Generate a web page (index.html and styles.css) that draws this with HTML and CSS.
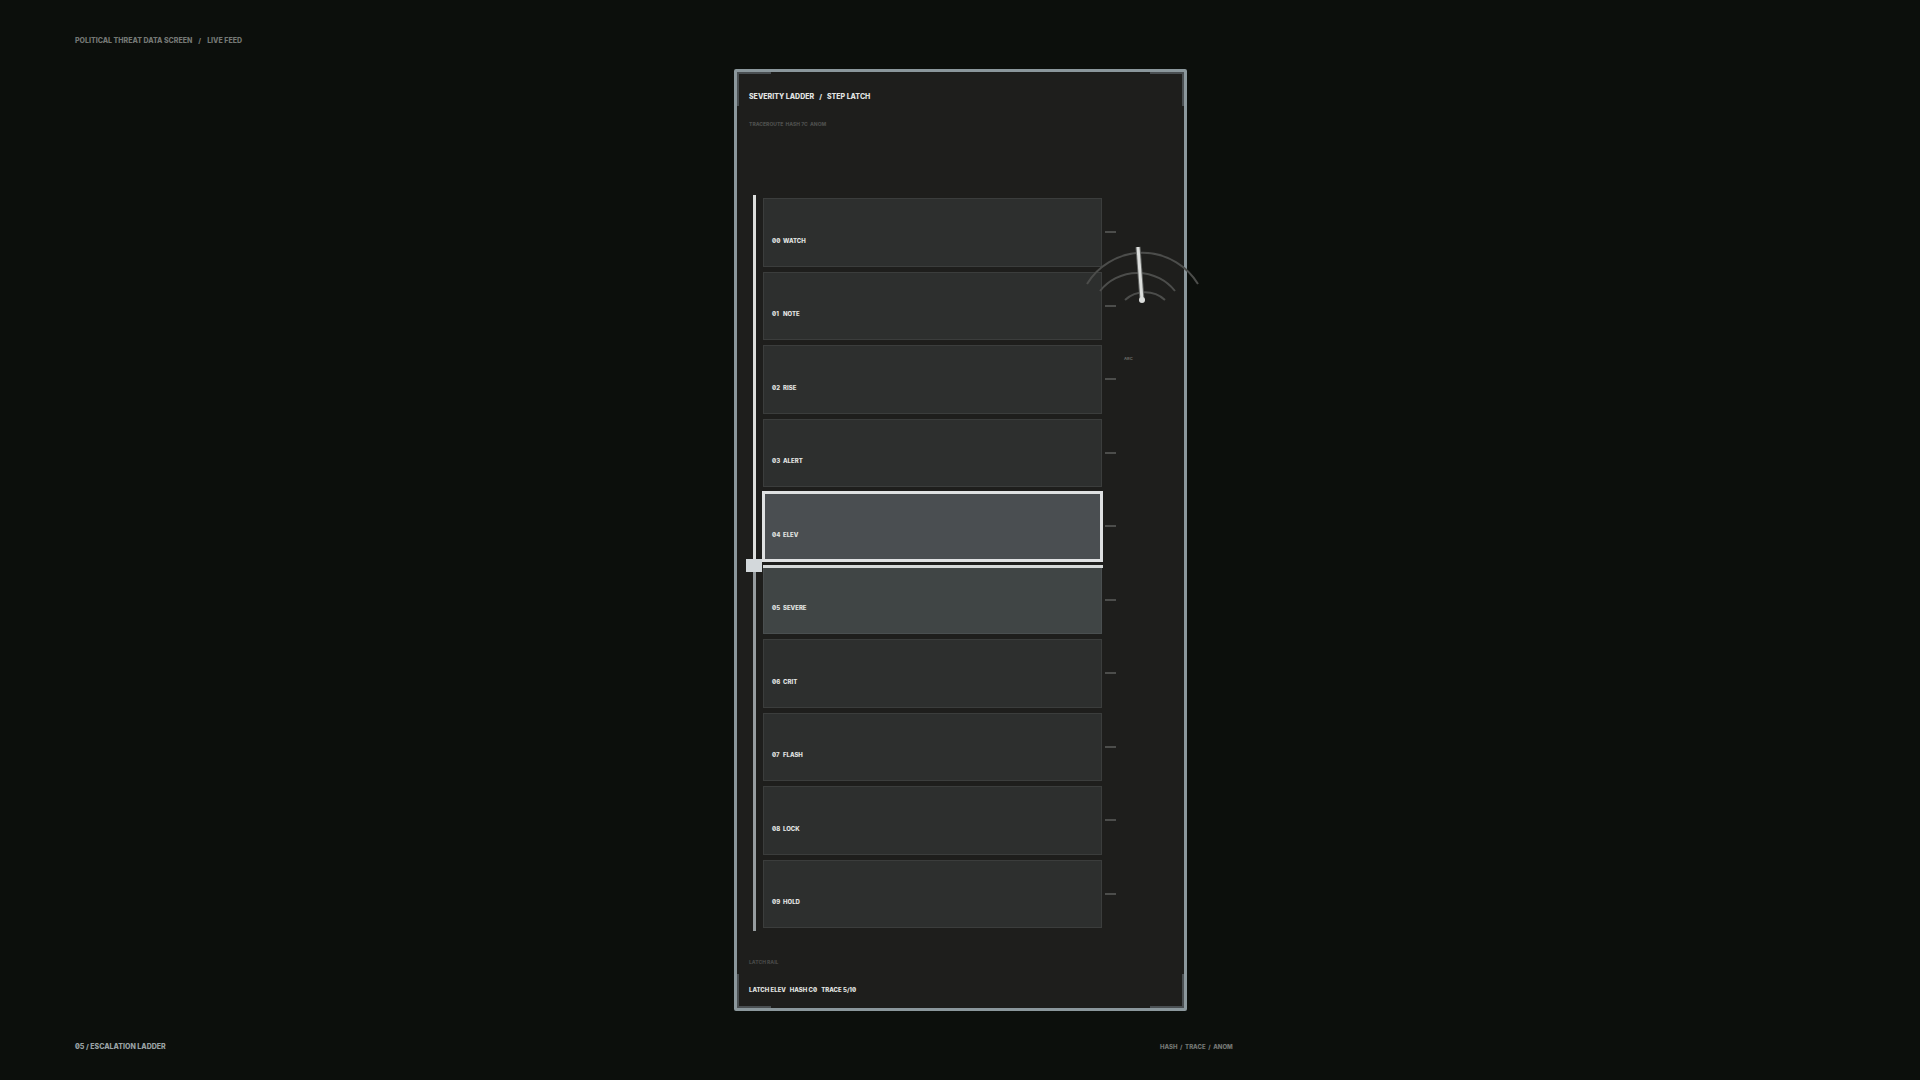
FILE: index.html
```
<!DOCTYPE html>
<html lang="en">
<head>
    <meta charset="UTF-8">
    <meta name="viewport" content="width=device-width, initial-scale=1.0">
    <title>Escalation Ladder</title>
    <link rel="stylesheet" href="styles.css">
</head>
<body>
    <header class="top">POLITICAL THREAT DATA SCREEN<b>/</b>LIVE FEED</header>

    <main class="panel">
        <i class="corner tl"></i>
        <i class="corner tr"></i>
        <i class="corner bl"></i>
        <i class="corner br"></i>

        <h1>SEVERITY LADDER<b>/</b>STEP LATCH</h1>
        <p class="route">TRACEROUTE &nbsp;HASH 7C &nbsp;ANOM</p>

        <div class="ladder">
            <div class="rail">
                <div class="rail-done"></div>
                <div class="handle"></div>
                <div class="rail-rest"></div>
            </div>
            <ol class="steps">
                <li><span>00</span>WATCH</li>
                <li><span>01</span>NOTE</li>
                <li><span>02</span>RISE</li>
                <li><span>03</span>ALERT</li>
                <li class="active"><span>04</span>ELEV</li>
                <li class="next"><span>05</span>SEVERE</li>
                <li><span>06</span>CRIT</li>
                <li><span>07</span>FLASH</li>
                <li><span>08</span>LOCK</li>
                <li><span>09</span>HOLD</li>
            </ol>
            <div class="ticks">
                <i></i><i></i><i></i><i></i><i></i><i></i><i></i><i></i><i></i><i></i>
            </div>
        </div>

        <!-- sweep gauge, hangs over the panel edge -->
        <div class="gauge">
            <svg width="120" height="64" viewBox="0 0 120 64" fill="none">
                <g stroke="#4c4d4b" stroke-width="2">
                    <path d="M5 42 A65 65 0 0 1 116 42"/>
                    <path d="M18 49 A48 48 0 0 1 93 49"/>
                    <path d="M43 58 A30 30 0 0 1 83 58"/>
                </g>
                <path d="M56 5 L60 58" stroke="#666866" stroke-width="5"/>
                <path d="M56 5 L60 58" stroke="#dcdedc" stroke-width="3"/>
                <circle cx="60" cy="58" r="3" fill="#dcdedc"/>
            </svg>
            <span>ARC</span>
        </div>

        <p class="rail-label">LATCH RAIL</p>
        <p class="status">LATCH ELEV &nbsp;&nbsp;HASH C0 &nbsp;&nbsp;TRACE 5/10</p>
    </main>

    <footer class="bottom">
        <span class="name">05 / ESCALATION LADDER</span>
        <span class="tags">HASH &nbsp;/&nbsp; TRACE &nbsp;/&nbsp; ANOM</span>
    </footer>
</body>
</html>
```

FILE: styles.css
```
* {
    box-sizing: border-box;
}

body {
    margin: 0;
    min-height: 100vh;
    display: flex;
    flex-direction: column;
    background: #0c0f0c;
    color: #e2e4e2;
    font-family: Inter, "Liberation Sans", sans-serif;
    font-weight: 800;
    font-feature-settings: "zero";
    font-size: 6px;
    line-height: 8px;
}

h1, p, ol {
    margin: 0;
    padding: 0;
}

b {
    margin: 0 5px;
    font-weight: 800;
}

.top {
    padding: 37px 75px 24px;
    font-size: 7px;
    color: #747774;
}

.top b {
    margin: 0 6px;
}

.panel {
    position: relative;
    flex: 1;
    width: 453px;
    margin-left: calc(50% - 226px);
    padding: 21px 0 14px;
    border: 3px solid #8b979c;
    border-radius: 2px;
    background: #1e1e1c;
    display: flex;
    flex-direction: column;
}

.corner {
    position: absolute;
    width: 34px;
    height: 34px;
    border: 0 solid #4a4f52;
}

.tl { top: 0; left: 0; border-width: 2px 0 0 2px; }
.tr { top: 0; right: 0; border-width: 2px 2px 0 0; }
.bl { bottom: 0; left: 0; border-width: 0 0 2px 2px; }
.br { bottom: 0; right: 0; border-width: 0 2px 2px 0; }

h1 {
    padding-left: 12px;
    font-size: 7px;
    font-weight: 800;
}

.route {
    margin-top: 19px;
    padding-left: 12px;
    font-size: 5px;
    color: #4d4e4c;
}

/* ladder */
.ladder {
    flex: 1;
    margin-top: 67px;
    padding-left: 9px;
    display: flex;
}

.rail {
    width: 16px;
    display: flex;
    flex-direction: column;
    align-items: center;
}

.rail-done {
    flex: 364;
    width: 3px;
    background: #dcdedc;
}

.handle {
    z-index: 1;
    width: 16px;
    height: 13px;
    background: #d3d8db;
}

.rail-rest {
    flex: 360;
    width: 3px;
    background: #969c9f;
}

.steps {
    width: 339px;
    margin: 3px 0 3px 1px;
    list-style: none;
    display: flex;
    flex-direction: column;
    gap: 5px;
}

.steps li {
    position: relative;
    flex: 1;
    padding: 17px 8px 0;
    border: 1px solid #3b3d3c;
    background: #2d2f2e;
    display: flex;
    align-items: center;
}

.steps span {
    width: 11px;
}

.steps .active {
    background: #4a4e51;
    border-color: #33373a;
    outline: 3px solid #dfe1e2;
    outline-offset: -2px;
}

.steps .next {
    background: #404545;
    border-color: #4a4f50;
}

/* latch line across the ladder */
.steps .next::before {
    content: "";
    position: absolute;
    top: -2px;
    left: -1px;
    right: -2px;
    height: 3px;
    background: #d6d9d9;
}

.ticks {
    width: 14px;
    margin: 3px 0;
    padding-left: 3px;
    display: flex;
    flex-direction: column;
    gap: 5px;
}

.ticks i {
    flex: 1;
    display: flex;
    align-items: center;
}

.ticks i::before {
    content: "";
    width: 11px;
    height: 2px;
    background: #4c4d4b;
}

.gauge {
    position: absolute;
    top: 170px;
    right: -18px;
}

.gauge svg {
    display: block;
}

.gauge span {
    display: block;
    margin: 49px 0 0 42px;
    font-size: 4px;
    color: #62635f;
}

.rail-label {
    margin-top: 27px;
    padding-left: 12px;
    font-size: 5px;
    color: #474846;
}

.status {
    margin-top: 20px;
    padding-left: 12px;
}

.bottom {
    display: flex;
    padding: 32px 75px 29px;
}

.name {
    width: calc(50% + 200px);
    font-size: 7px;
    color: #9aa2a5;
}

.tags {
    color: #747774;
}
```
